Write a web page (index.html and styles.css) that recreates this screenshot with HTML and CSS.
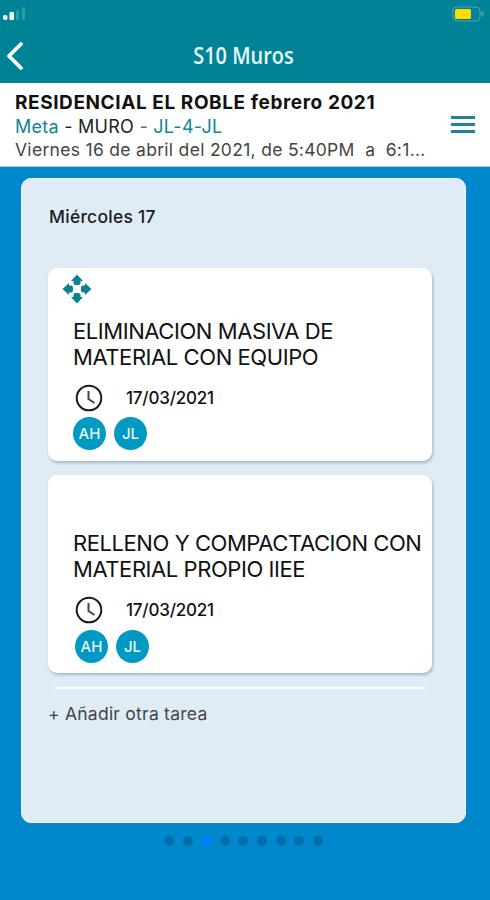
FILE: index.html
```html
<!DOCTYPE html>
<html lang="es">
<head>
  <meta charset="UTF-8" />
  <meta name="viewport" content="width=device-width, initial-scale=1.0"/>
  <title>S10 Muros</title>
  <link rel="stylesheet" href="styles.css">
</head>
<body>
  <header class="topbar">
    <div class="status">
      <svg width="24" height="14" viewBox="0 0 24 14">
        <rect x="0" y="9" width="4.500" height="5" rx="2" fill="#fff"/>
        <rect x="6.500" y="6" width="4.500" height="8" rx="1" fill="#fff"/>
        <rect x="13" y="4" width="3" height="10" rx="1" fill="#2b9bac"/>
        <rect x="19" y="1" width="3" height="13" rx="1" fill="#2b9bac"/>
      </svg>
      <svg width="34" height="16" viewBox="0 0 34 16">
        <rect x="1" y="1" width="27" height="14" rx="4" fill="none" stroke="#4aa5b2"/>
        <path d="M29.500 5l3 3-3 3z" fill="#4aa5b2"/>
        <rect x="3" y="3" width="16" height="10" rx="1.500" fill="#ffdc00"/>
      </svg>
    </div>
    <div class="nav">
      <svg class="back" width="20" height="30" viewBox="0 0 20 30">
        <path d="M15 3L3 15l12 12" fill="none" stroke="#fff" stroke-width="3.800" stroke-linecap="round" stroke-linejoin="round"/>
      </svg>
      <h1>S10 Muros</h1>
    </div>
  </header>

  <section class="project">
    <div class="info">
      <h2>RESIDENCIAL EL ROBLE febrero 2021</h2>
      <p class="meta">Meta <span>- MURO</span> - JL-4-JL</p>
      <p class="date">Viernes 16 de abril del 2021, de 5:40PM&nbsp; a&nbsp; 6:1...</p>
    </div>
    <div class="menu"><i></i><i></i><i></i></div>
  </section>

  <main class="board">
    <h3>Miércoles 17</h3>

    <article class="card">
      <svg class="move" width="30" height="30" viewBox="0 0 30 30" fill="#0a8294">
        <path id="arrow" d="M15 .5l6 6.500h-2.500v2.500l-1.500 1.500h-4l-1.500-1.500V7H9z"/>
        <use href="#arrow" transform="rotate(90 15 15)"/>
        <use href="#arrow" transform="rotate(180 15 15)"/>
        <use href="#arrow" transform="rotate(270 15 15)"/>
      </svg>
      <p class="task">ELIMINACION MASIVA DE<br>MATERIAL CON EQUIPO</p>
      <div class="when">
        <svg width="28" height="28" viewBox="0 0 28 28" fill="none" stroke="#1b1b1b" stroke-width="2">
          <circle cx="14" cy="14" r="12.300"/>
          <path d="M13.500 7v8l6 4" stroke="#444"/>
        </svg>
        <span>17/03/2021</span>
      </div>
      <div class="people"><b>AH</b><b>JL</b></div>
    </article>

    <article class="card second">
      <p class="task">RELLENO Y COMPACTACION CON<br>MATERIAL PROPIO IIEE</p>
      <div class="when">
        <svg width="28" height="28" viewBox="0 0 28 28" fill="none" stroke="#1b1b1b" stroke-width="2">
          <circle cx="14" cy="14" r="12.300"/>
          <path d="M13.500 7v8l6 4" stroke="#444"/>
        </svg>
        <span>17/03/2021</span>
      </div>
      <div class="people"><b>AH</b><b>JL</b></div>
    </article>

    <p class="add">+ Añadir otra tarea</p>
  </main>

  <div class="dots">
    <i></i><i></i><i class="active"></i><i></i><i></i><i></i><i></i><i></i><i></i>
  </div>
</body>
</html>
```
FILE: styles.css
```css
* {
  box-sizing: border-box;
}

body {
  margin: 0;
  height: 900px;
  overflow: hidden;
  background: #0087cc;
  font-family: Inter, "Liberation Sans", sans-serif;
  color: #111;
}

h1, h2, h3, p {
  margin: 0;
  font-weight: 400;
  white-space: nowrap;
}

svg {
  display: block;
  flex: none;
}

.topbar {
  height: 83px;
  background: #008396;
}

.status {
  display: flex;
  justify-content: space-between;
  height: 28px;
  padding: 6px 4px 0 3px;
}

.nav {
  display: grid;
  grid-template-columns: 40px 1fr 44px;
  align-items: center;
  height: 56px;
}

.back {
  margin-left: 6px;
}

.nav h1 {
  justify-self: center;
  padding-bottom: 3px;
  font-family: "Open Sans", sans-serif;
  font-size: 24px;
  font-weight: 600;
  color: #e9f7f9;
  transform: scaleX(0.83);
}

.project {
  display: flex;
  justify-content: space-between;
  height: 84px;
  padding: 8px 15px 0 15px;
  background: #fff;
  border-bottom: 1px solid #9cc9e6;
}

.project h2 {
  font-size: 19px;
  line-height: 24px;
  font-weight: 650;
  letter-spacing: 0.58px;
}

.meta {
  font-size: 18px;
  line-height: 24px;
  letter-spacing: 0.26px;
  color: #128399;
}

.meta span {
  color: #222;
}

.date {
  font-size: 17.500px;
  line-height: 21px;
  letter-spacing: 0.3px;
  color: #444;
}

.menu {
  display: flex;
  flex-direction: column;
  gap: 4px;
  margin-top: 25px;
}

.menu i {
  width: 24px;
  height: 3px;
  background: #228396;
}

.board {
  width: 445px;
  height: 645px;
  margin: 11px 0 0 21px;
  padding: 26px 33px 0 26px;
  background: #dfecf6;
  border: 1px solid #f4fbff;
  border-radius: 10px;
}

.board h3 {
  margin: 0 0 39px 1px;
  font-size: 17.500px;
  line-height: 24px;
  font-weight: 450;
  letter-spacing: 0.25px;
  color: #1c1c1c;
}

.card {
  height: 193px;
  padding: 6px 0 0 25px;
  margin-bottom: 14px;
  background: #fff;
  border-radius: 9px;
  box-shadow: 1px 2px 3px rgba(60, 90, 110, 0.35);
}

.card.second {
  height: 198px;
  padding-top: 55px;
}

.move {
  margin: 0 0 14px -11px;
}

.task {
  font-size: 22px;
  line-height: 26px;
  letter-spacing: -0.43px;
}

.when {
  display: flex;
  align-items: center;
  gap: 23px;
  margin: 14px 0 0 2px;
  font-size: 17px;
  font-weight: 450;
  letter-spacing: -0.2px;
}

.people {
  display: flex;
  gap: 8px;
  margin-top: 5px;
}

.second .people {
  margin: 6px 0 0 2px;
}

.people b {
  width: 33px;
  height: 33px;
  border-radius: 50%;
  background: #0099c3;
  color: #e6f6fb;
  font-size: 15px;
  line-height: 33px;
  font-weight: 500;
  text-align: center;
}

.add {
  margin: 0 7px;
  padding-top: 13px;
  border-top: 2px solid #fafdff;
  font-size: 17.500px;
  line-height: 24px;
  letter-spacing: 0.24px;
  color: #444;
  text-indent: -7px;
}

.dots {
  display: flex;
  gap: 8.600px;
  margin: 13px 0 0 164px;
}

.dots i {
  width: 10px;
  height: 10px;
  border-radius: 50%;
  background: #006fa9;
}

.dots .active {
  background: #0080ff;
}
```
